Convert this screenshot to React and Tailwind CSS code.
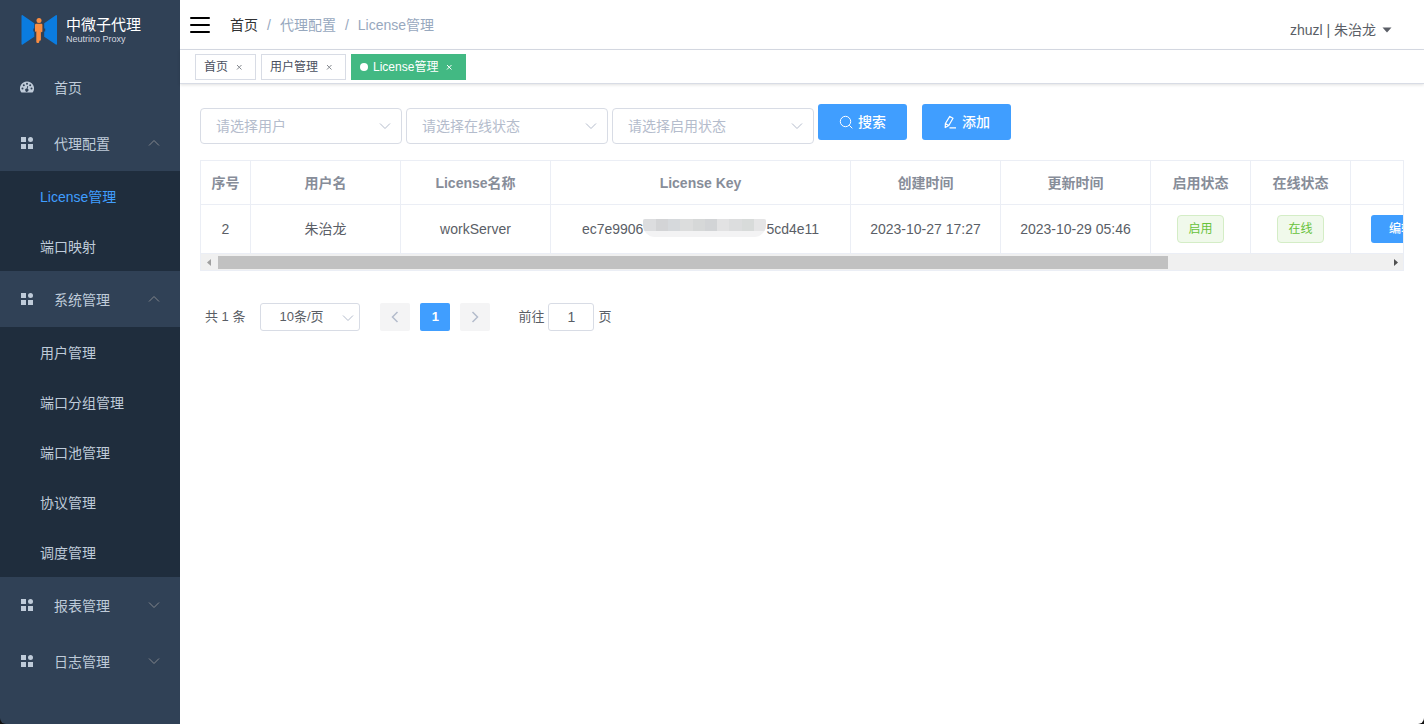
import { useState } from "react";
import clsx from "clsx";

const MENU = [
  { title: "首页", icon: "dashboard" },
  { title: "代理配置", icon: "grid", open: true, children: ["License管理", "端口映射"] },
  { title: "系统管理", icon: "grid", open: true, children: ["用户管理", "端口分组管理", "端口池管理", "协议管理", "调度管理"] },
  { title: "报表管理", icon: "grid", children: [] },
  { title: "日志管理", icon: "grid", children: [] },
];

const TAGS = ["首页", "用户管理", "License管理"];

const COLUMNS = [
  { label: "序号", width: "w-[50px]" },
  { label: "用户名", width: "w-[150px]" },
  { label: "License名称", width: "w-[150px]" },
  { label: "License Key", width: "w-[300px]" },
  { label: "创建时间", width: "w-[150px]" },
  { label: "更新时间", width: "w-[150px]" },
  { label: "启用状态", width: "w-[100px]" },
  { label: "在线状态", width: "w-[100px]" },
  { label: "", width: "w-[330px]" },
];

const MASK = ["bg-[#dcdddf]", "bg-[#d3d4d6]", "bg-[#d6d9dc]", "bg-[#dcdddd]", "bg-[#d6d8d8]", "bg-[#d2d4d6]", "bg-[#e2e2e3]", "bg-[#dcddde]", "bg-[#d8dbda]", "bg-[#e5e5e6]"];

function Chevron({ className, up }) {
  return (
    <svg viewBox="0 0 12 12" className={clsx("h-3 w-3", className)} fill="none" stroke="currentColor" aria-hidden="true">
      <path d={up ? "M1 8.5 6 3.5l5 5" : "M1 3.5l5 5 5-5"} />
    </svg>
  );
}

function MenuIcon({ name }) {
  if (name === "dashboard") {
    return (
      <svg viewBox="0 0 14 14" className="h-3.5 w-3.5" aria-hidden="true">
        <path fill="currentColor" d="M7 1.5a7 7 0 0 0-6 10.6c.1.2.3.4.6.4h10.8c.3 0 .5-.2.6-.4A7 7 0 0 0 7 1.5Z" />
        <g fill="#304156">
          <circle cx="2.5" cy="8.5" r="1" />
          <circle cx="3.8" cy="5.2" r="1" />
          <circle cx="7" cy="3.8" r="1" />
          <circle cx="10.2" cy="5.2" r="1" />
          <circle cx="11.5" cy="8.5" r="1" />
          <path d="m7.4 5.9.8.2-.6 2.6a1.6 1.6 0 1 1-.9-.2Z" />
        </g>
      </svg>
    );
  }
  return (
    <svg viewBox="0 0 14 14" className="h-3.5 w-3.5" fill="currentColor" aria-hidden="true">
      <path d="M1 1h5v5H1zM1 8h5v5H1zM8 8h5v5H8z" />
      <circle cx="10.5" cy="3.5" r="2.5" />
    </svg>
  );
}

function Logo() {
  return (
    <div className="flex h-[59px] items-center gap-2 pl-5">
      <svg viewBox="0 0 38 32" className="h-8 w-[38px]" aria-hidden="true">
        <path
          fill="#0a7ce0"
          d="M1.500 1.900c0-.7.6-1 1.200-.6L14.300 9.200v5.300h-1v3h1v5.300L2.700 30.600c-.6.4-1.200.1-1.200-.6ZM37 1.900c0-.7-.6-1-1.200-.6L24.200 9.200v5.300h1v3h-1v5.300l11.600 7.800c.6.4 1.200.1 1.200-.6Z"
        />
        <g fill="#f98d42">
          <circle cx="19" cy="6.400" r="2.500" />
          <path d="M17 9.800h4.200c.8 0 1.200.5 1.200 1.200v6.300c0 1.200-1.500 1.200-1.500 0v8.200c0 1-.9 1.400-1.600 1.200v.7c0 1-.7 1.500-1.500 1.500s-1.500-.5-1.500-1.500V17c-.1 1.200-1.300 1-1.300-.1V11c0-.7.7-1.200 1.400-1.200Z" />
        </g>
      </svg>
      <div className="text-white">
        <div className="text-[15px] leading-4">中微子代理</div>
        <div className="mt-0.5 text-[9px] leading-2 text-[#d5dae0]">Neutrino Proxy</div>
      </div>
    </div>
  );
}

function Sidebar() {
  const [open, setOpen] = useState(() => MENU.filter((m) => m.open).map((m) => m.title));
  const toggle = (title) => setOpen((o) => (o.includes(title) ? o.filter((t) => t !== title) : [...o, title]));

  return (
    <nav className="w-[180px] shrink-0 rounded-bl-md bg-[#304156] text-sm text-[#bfcbd9]">
      <Logo />
      {MENU.map((item) => (
        <div key={item.title}>
          <button onClick={() => toggle(item.title)} className="flex h-14 w-full items-center px-5 text-left">
            <MenuIcon name={item.icon} />
            <span className="ml-5 flex-1 pt-0.5">{item.title}</span>
            {item.children && <Chevron up={open.includes(item.title)} className="text-[#84878d]" />}
          </button>
          {item.children && open.includes(item.title) && (
            <div className="bg-[#1f2d3d]">
              {item.children.map((child) => (
                <a key={child} href="#" className={clsx("flex h-[50px] items-center pt-0.5 pl-10", child === "License管理" && "text-[#409eff]")}>
                  {child}
                </a>
              ))}
            </div>
          )}
        </div>
      ))}
    </nav>
  );
}

function Header() {
  return (
    <header className="flex h-[50px] items-center border-b border-[#d8dce5] pr-8 pl-2.5 text-sm">
      <button aria-label="菜单" className="flex h-5 w-5 flex-col justify-center gap-[5px]">
        <span className="h-0.5 w-full rounded-full bg-black" />
        <span className="h-0.5 w-full rounded-full bg-black" />
        <span className="h-0.5 w-full rounded-full bg-black" />
      </button>
      <div className="ml-5 flex flex-1 items-center text-[#97a8be]">
        <a href="#" className="text-[#303133]">首页</a>
        <span className="mx-[9px]">/</span>
        <span>代理配置</span>
        <span className="mx-[9px]">/</span>
        <span>License管理</span>
      </div>
      <button className="mt-2.5 flex items-center gap-1.5 text-[#5a5e66]">
        zhuzl | 朱治龙
        <svg viewBox="0 0 10 6" className="h-1.5 w-2.5" fill="currentColor" aria-hidden="true">
          <path d="M.5.5h9L5 5.500Z" />
        </svg>
      </button>
    </header>
  );
}

function TagsBar() {
  return (
    <div className="flex h-[34px] items-center gap-[5px] border-b border-[#d8dce5] px-[15px] text-xs shadow-[0_1px_3px_0_rgba(0,0,0,.12)]">
      {TAGS.map((tag) => {
        const active = tag === "License管理";
        return (
          <a
            key={tag}
            href="#"
            className={clsx("flex h-[26px] items-center border px-2 pt-px", active ? "border-[#42b983] bg-[#42b983] text-white" : "border-[#d8dce5] text-[#495060]")}
          >
            {active && <span className="mr-[5px] h-2 w-2 rounded-full bg-white" />}
            {tag}
            <svg viewBox="0 0 16 16" className={clsx("ml-[3px] h-4 w-4", !active && "text-[#85898f]")} stroke="currentColor" aria-hidden="true">
              <path d="m6 6 4.500 4.500m0-4.500L6 10.500" />
            </svg>
          </a>
        );
      })}
    </div>
  );
}

function FilterSelect({ placeholder }) {
  return (
    <div className="relative mt-1 w-[202px]">
      <select aria-label={placeholder} className="h-9 w-full appearance-none rounded border border-[#d8dce5] bg-white px-[15px] text-sm text-[#b4bccc]">
        <option>{placeholder}</option>
      </select>
      <Chevron className="pointer-events-none absolute top-3 right-[11px] text-[#b4bccc]" />
    </div>
  );
}

function PrimaryButton({ children }) {
  return (
    <button className="flex h-9 w-[89px] items-center justify-center gap-[5px] rounded-[3px] bg-[#409eff] text-sm font-medium text-white">
      {children}
    </button>
  );
}

function Filters() {
  return (
    <div className="flex items-start gap-1">
      <FilterSelect placeholder="请选择用户" />
      <FilterSelect placeholder="请选择在线状态" />
      <FilterSelect placeholder="请选择启用状态" />
      <div className="flex gap-[15px]">
        <PrimaryButton>
          <svg viewBox="0 0 14 14" className="h-3.5 w-3.5" fill="none" stroke="currentColor" aria-hidden="true">
            <circle cx="6.500" cy="6.500" r="5.200" />
            <path d="m10.300 10.300 3 3" />
          </svg>
          搜索
        </PrimaryButton>
        <PrimaryButton>
          <svg viewBox="0 0 14 14" className="h-3.5 w-3.5" fill="none" stroke="currentColor" strokeWidth="1.2" strokeLinejoin="round" aria-hidden="true">
            <path d="M6.800 1.400 10 3.200 5.800 10.500l-3.600 2 .200-4ZM2.800 8.700l2.800 1.700M6.500 12.900H13" />
          </svg>
          添加
        </PrimaryButton>
      </div>
    </div>
  );
}

function StatusTag({ children }) {
  return (
    <span className="inline-flex h-7 items-center rounded border border-[#d4edc6] bg-[#f0f9eb] px-[10px] align-middle text-xs text-[#67c23a]">
      {children}
    </span>
  );
}

function MaskedKey({ head, tail }) {
  return (
    <span className="inline-flex items-center">
      {head}
      <span className="mb-0.5 flex h-[18px] w-[123px] flex-col overflow-hidden rounded-t-xs rounded-b-xl bg-[#f3f3f4]">
        <span className="flex h-3">
          {MASK.map((tone, i) => (
            <span key={i} className={clsx("flex-1", tone)} />
          ))}
        </span>
      </span>
      {tail}
    </span>
  );
}

function LicenseTable() {
  return (
    <div className="mt-4 border border-[#ebeef5] text-sm">
      <div className="overflow-hidden">
        <table className="w-[1480px] table-fixed border-separate border-spacing-0 text-center text-[#5a5e66]">
          <thead>
            <tr className="h-11 text-[#878d99]">
              {COLUMNS.map((c) => (
                <th key={c.label} className={clsx("border-r border-b border-[#ebeef5] p-0 font-bold", c.width)}>{c.label}</th>
              ))}
            </tr>
          </thead>
          <tbody>
            <tr className="h-[49px] *:border-r *:border-b *:border-[#ebeef5] *:p-0">
              <td>2</td>
              <td>朱治龙</td>
              <td>workServer</td>
              <td><MaskedKey head="ec7e9906" tail="5cd4e11" /></td>
              <td>2023-10-27 17:27</td>
              <td>2023-10-29 05:46</td>
              <td><StatusTag>启用</StatusTag></td>
              <td><StatusTag>在线</StatusTag></td>
              <td>
                <button className="ml-5 flex h-7 items-center rounded-[3px] bg-[#409eff] px-[18px] text-xs font-medium text-white">编辑</button>
              </td>
            </tr>
          </tbody>
        </table>
      </div>
      {/* horizontal scrollbar */}
      <div className="flex h-4 items-center bg-[#f0f0f0]">
        <svg viewBox="0 0 17 13" className="h-[13px] w-[17px] text-[#a0a0a0]" fill="currentColor" aria-hidden="true">
          <path d="M10 3v7L6 6.500Z" />
        </svg>
        <div className="flex-1">
          <div className="h-[13px] w-[81.3%] bg-[#c1c1c1]" />
        </div>
        <svg viewBox="0 0 17 13" className="h-[13px] w-[17px] text-[#505050]" fill="currentColor" aria-hidden="true">
          <path d="M8 3v7l4-3.500Z" />
        </svg>
      </div>
    </div>
  );
}

function Pagination() {
  const [page, setPage] = useState("1");
  return (
    <div className="mt-8 flex h-7 items-center pl-[5px] text-[13px] text-[#5a5e66]">
      <span>共 1 条</span>
      <div className="relative ml-[15px]">
        <select aria-label="每页条数" className="h-7 w-[100px] appearance-none rounded-[3px] border border-[#d8dce5] bg-white pl-[18px]">
          <option>10条/页</option>
        </select>
        <Chevron className="pointer-events-none absolute top-[9px] right-1.5 h-2.5 text-[#b4bccc]" />
      </div>
      <div className="ml-5 flex gap-2.5">
        <button aria-label="上一页" className="flex h-7 w-[30px] items-center justify-center rounded-xs bg-[#f4f4f5] text-[#b4bccc]">
          <Chevron className="rotate-90 stroke-[1.5]" />
        </button>
        <button className="h-7 w-[30px] rounded-xs bg-[#409eff] font-bold text-white">1</button>
        <button aria-label="下一页" className="flex h-7 w-[30px] items-center justify-center rounded-xs bg-[#f4f4f5] text-[#b4bccc]">
          <Chevron className="-rotate-90 stroke-[1.5]" />
        </button>
      </div>
      <label className="ml-7 flex items-center gap-1">
        前往
        <input value={page} onChange={(e) => setPage(e.target.value)} className="h-7 w-[46px] rounded-[3px] border border-[#d8dce5] text-center text-sm" />
        页
      </label>
    </div>
  );
}

export default function App() {
  return (
    <div className="flex min-h-screen bg-[#111] font-['Liberation_Sans','Noto_Sans_CJK_SC',sans-serif]">
      <Sidebar />
      <div className="flex min-w-0 flex-1 flex-col rounded-br-md bg-white">
        <Header />
        <TagsBar />
        <main className="p-5">
          <Filters />
          <LicenseTable />
          <Pagination />
        </main>
      </div>
    </div>
  );
}
